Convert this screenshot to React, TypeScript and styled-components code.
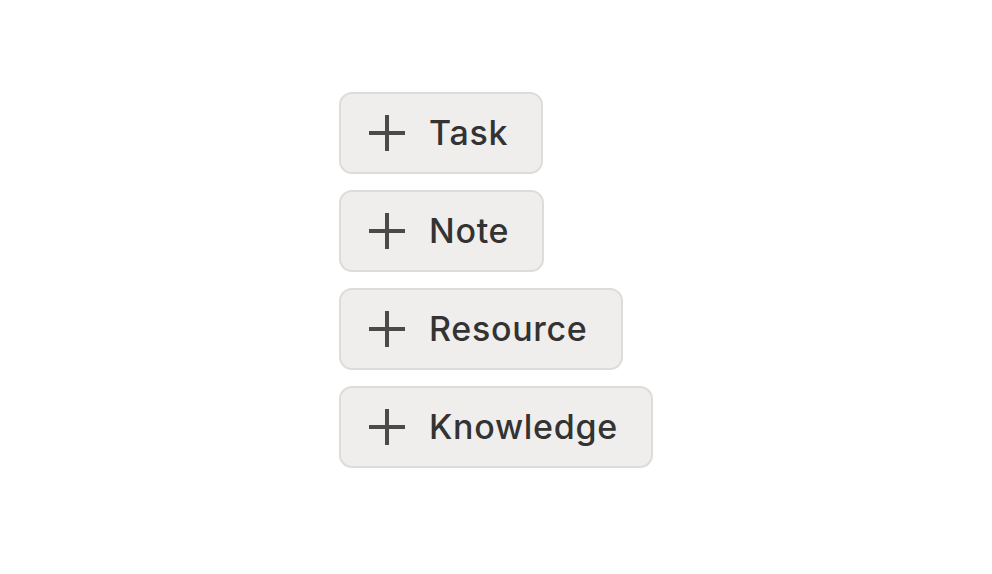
import React from "react"
import styled, { createGlobalStyle } from "styled-components"

const GlobalStyle = createGlobalStyle`
  html, body {
    margin: 0;
    padding: 0;
    background: #ffffff;
    font-family: Inter, "Noto Sans", sans-serif;
  }
`

const Page = styled.div`
  width: 992px;
  height: 574px;
  box-sizing: border-box;
  padding: 92px 0 0 339px;
`

const ButtonList = styled.div`
  display: flex;
  flex-direction: column;
  align-items: flex-start;
  gap: 16.5px;
`

const AddButton = styled.button`
  display: flex;
  align-items: center;
  gap: 23px;
  box-sizing: border-box;
  height: 81.5px;
  padding: 0 33px 0 27px;
  background: #efeeec;
  border: 2px solid #dddcda;
  border-radius: 13px;
  color: #333333;
  font-family: Inter, "Noto Sans", sans-serif;
  font-size: 34px;
  font-weight: 500;
  letter-spacing: 0.7px;
  cursor: pointer;
`

const PlusIcon = () => (
  <svg width="38" height="38" viewBox="0 0 38 38">
    <path d="M19 1v36M1 19h36" stroke="#4a4a4a" strokeWidth="4" />
  </svg>
)

const items = ["Task", "Note", "Resource", "Knowledge"]

export default function App() {
  return (
    <>
      <GlobalStyle />
      <Page>
        <ButtonList>
          {items.map((label) => (
            <AddButton key={label}>
              <PlusIcon />
              {label}
            </AddButton>
          ))}
        </ButtonList>
      </Page>
    </>
  )
}
